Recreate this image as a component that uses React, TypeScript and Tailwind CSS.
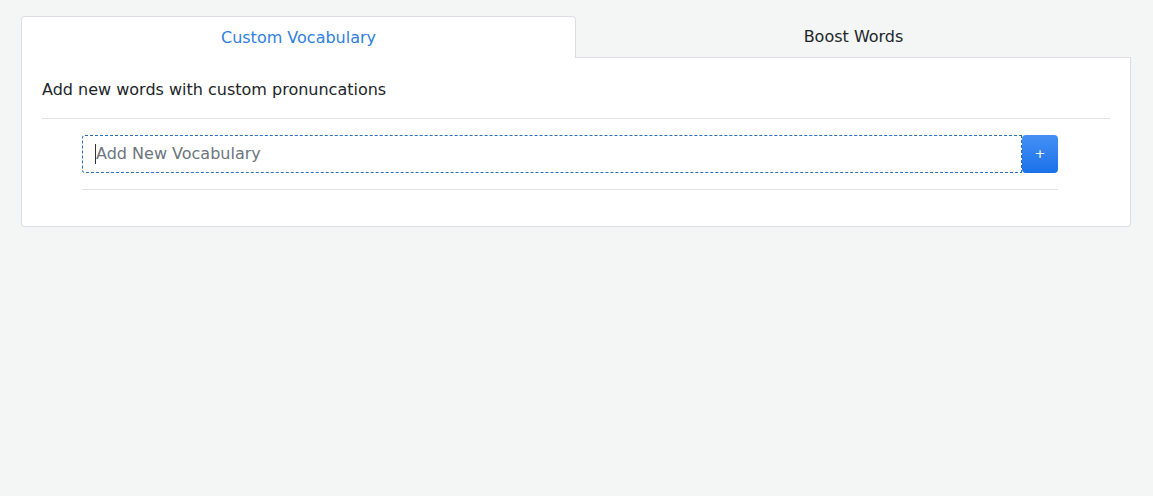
import React from "react";

export default function App() {
  return (
    <div
      className="min-h-[496px] w-full bg-[#f4f6f6] pt-4 px-[21px] text-[#212529]"
      style={{ fontFamily: '"DejaVu Sans", "Liberation Sans", sans-serif' }}
    >
      <div className="w-[1110px]">
        <div className="flex h-[42px]">
          <div className="flex w-[555px] items-center justify-center rounded-t-[4px] border border-b-0 border-[#dcdde3] bg-white text-[16px] text-[#2f80e0]">
            Custom Vocabulary
          </div>
          <div className="flex flex-1 items-center justify-center border-b border-[#dcdde3] text-[16px] text-[#212529]">
            Boost Words
          </div>
        </div>
        <div className="h-[169px] rounded-b-[4px] border border-t-0 border-[#dcdde3] bg-white px-5 pt-[22px]">
          <div className="text-[16px] leading-[20px]">Add new words with custom pronuncations</div>
          <div className="mt-[18px] border-t border-[#e1e3e6]" />
          <div className="ml-10 mr-[52px] mt-4">
            <div className="flex h-[38px]">
              <div className="flex flex-1 items-center rounded-l-[3px] border border-dashed border-[#2b6fb8] bg-white pl-3">
                <span className="h-[20px] w-px bg-[#333]" />
                <span className="text-[16px] text-[#6c757d]">Add New Vocabulary</span>
              </div>
              <button className="flex w-[36px] items-center justify-center rounded-[4px] bg-gradient-to-b from-[#4490f5] to-[#1a70e8] text-[13px] text-white">
                +
              </button>
            </div>
            <div className="mt-4 border-t border-[#e1e3e6]" />
          </div>
        </div>
      </div>
    </div>
  );
}
